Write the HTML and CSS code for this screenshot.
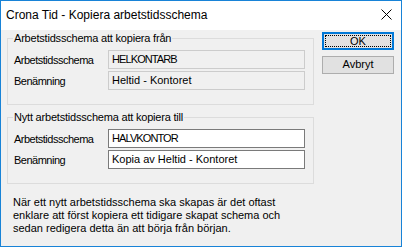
FILE: index.html
```html
<!DOCTYPE html>
<html lang="sv">
<head>
<meta charset="utf-8">
<title>Crona Tid - Kopiera arbetstidsschema</title>
<link rel="stylesheet" href="styles.css">
</head>
<body>
<div class="window">
  <div class="titlebar">
    <span class="title">Crona Tid - Kopiera arbetstidsschema</span>
    <svg class="close" width="11" height="11" viewBox="0 0 11 11" aria-hidden="true">
      <path d="M0.5 0.5 L10.5 10.5 M10.5 0.5 L0.5 10.5" stroke="#000" stroke-width="1" fill="none"/>
    </svg>
  </div>
  <div class="content">
    <div class="main">
      <fieldset class="group">
        <legend>Arbetstidsschema att kopiera från</legend>
        <div class="row">
          <span class="label">Arbetstidsschema</span>
          <div class="field disabled code">HELKONTARB</div>
        </div>
        <div class="row">
          <span class="label">Benämning</span>
          <div class="field disabled">Heltid - Kontoret</div>
        </div>
      </fieldset>
      <fieldset class="group second">
        <legend>Nytt arbetstidsschema att kopiera till</legend>
        <div class="row">
          <span class="label">Arbetstidsschema</span>
          <div class="field code">HALVKONTOR</div>
        </div>
        <div class="row">
          <span class="label">Benämning</span>
          <div class="field">Kopia av Heltid - Kontoret</div>
        </div>
      </fieldset>
      <p class="note">När ett nytt arbetstidsschema ska skapas är det oftast<br>enklare att först kopiera ett tidigare skapat schema och<br>sedan redigera detta än att börja från början.</p>
    </div>
    <div class="buttons">
      <button class="btn default" type="button"><span class="focus">OK</span></button>
      <button class="btn" type="button">Avbryt</button>
    </div>
  </div>
</div>
</body>
</html>
```

FILE: styles.css
```css
* { box-sizing: border-box; }

html, body {
  margin: 0;
  padding: 0;
  background: #f0f0f0;
}

body {
  font-family: "Liberation Sans", Arial, sans-serif;
  font-size: 11px;
  color: #000;
}

.window {
  width: 402px;
  height: 247px;
  border: 1px solid #1883d7;
  background: #f0f0f0;
  display: flex;
  flex-direction: column;
  overflow: hidden;
}

.titlebar {
  height: 29px;
  background: #fff;
  display: flex;
  justify-content: space-between;
  align-items: flex-start;
  flex: none;
}

.title {
  font-size: 12px;
  line-height: 15px;
  padding: 7px 0 0 5px;
}

.close {
  margin: 8px 9px 0 0;
  display: block;
}

.content {
  display: flex;
  gap: 8px;
  padding: 1px 0 0 6px;
}

.main {
  width: 307px;
  display: flex;
  flex-direction: column;
}

.group {
  margin: 0;
  padding: 5px 0 14px 0;
  border: 1px solid #dcdcdc;
  min-inline-size: 0;
  display: flex;
  flex-direction: column;
  gap: 2px;
}

.group.second {
  margin-top: 5px;
}

.group legend {
  margin-left: 5px;
  padding: 0 1px;
  line-height: 14px;
  letter-spacing: -0.2px;
}

.row {
  display: grid;
  grid-template-columns: 94px 197px;
  align-items: center;
  padding-left: 6px;
}

.label {
  letter-spacing: -0.5px;
  white-space: nowrap;
}

.field {
  height: 19px;
  line-height: 17px;
  border: 1px solid #7a7a7a;
  background: #fff;
  padding: 0 3px;
  white-space: nowrap;
  overflow: hidden;
}

.field.disabled {
  border-color: #cccccc;
  background: #f0f0f0;
}

.field.code {
  letter-spacing: -0.9px;
}

.note {
  margin: 12px 0 0 6px;
  line-height: 13px;
  white-space: nowrap;
}

.buttons {
  display: flex;
  flex-direction: column;
  gap: 6px;
  padding-top: 1px;
}

.btn {
  width: 72px;
  height: 18px;
  padding: 0;
  margin: 0;
  border: 1px solid #adadad;
  background: #e1e1e1;
  font-family: inherit;
  font-size: 11px;
  color: #000;
  line-height: 14px;
  display: flex;
  align-items: stretch;
  justify-content: center;
}

.btn.default {
  border-color: #0078d7;
  box-shadow: inset 0 0 0 1px #0078d7;
  padding: 2px;
}

.btn .focus {
  flex: 1;
  border: 1px dotted #000;
  line-height: 10px;
  display: flex;
  align-items: center;
  justify-content: center;
}
```
